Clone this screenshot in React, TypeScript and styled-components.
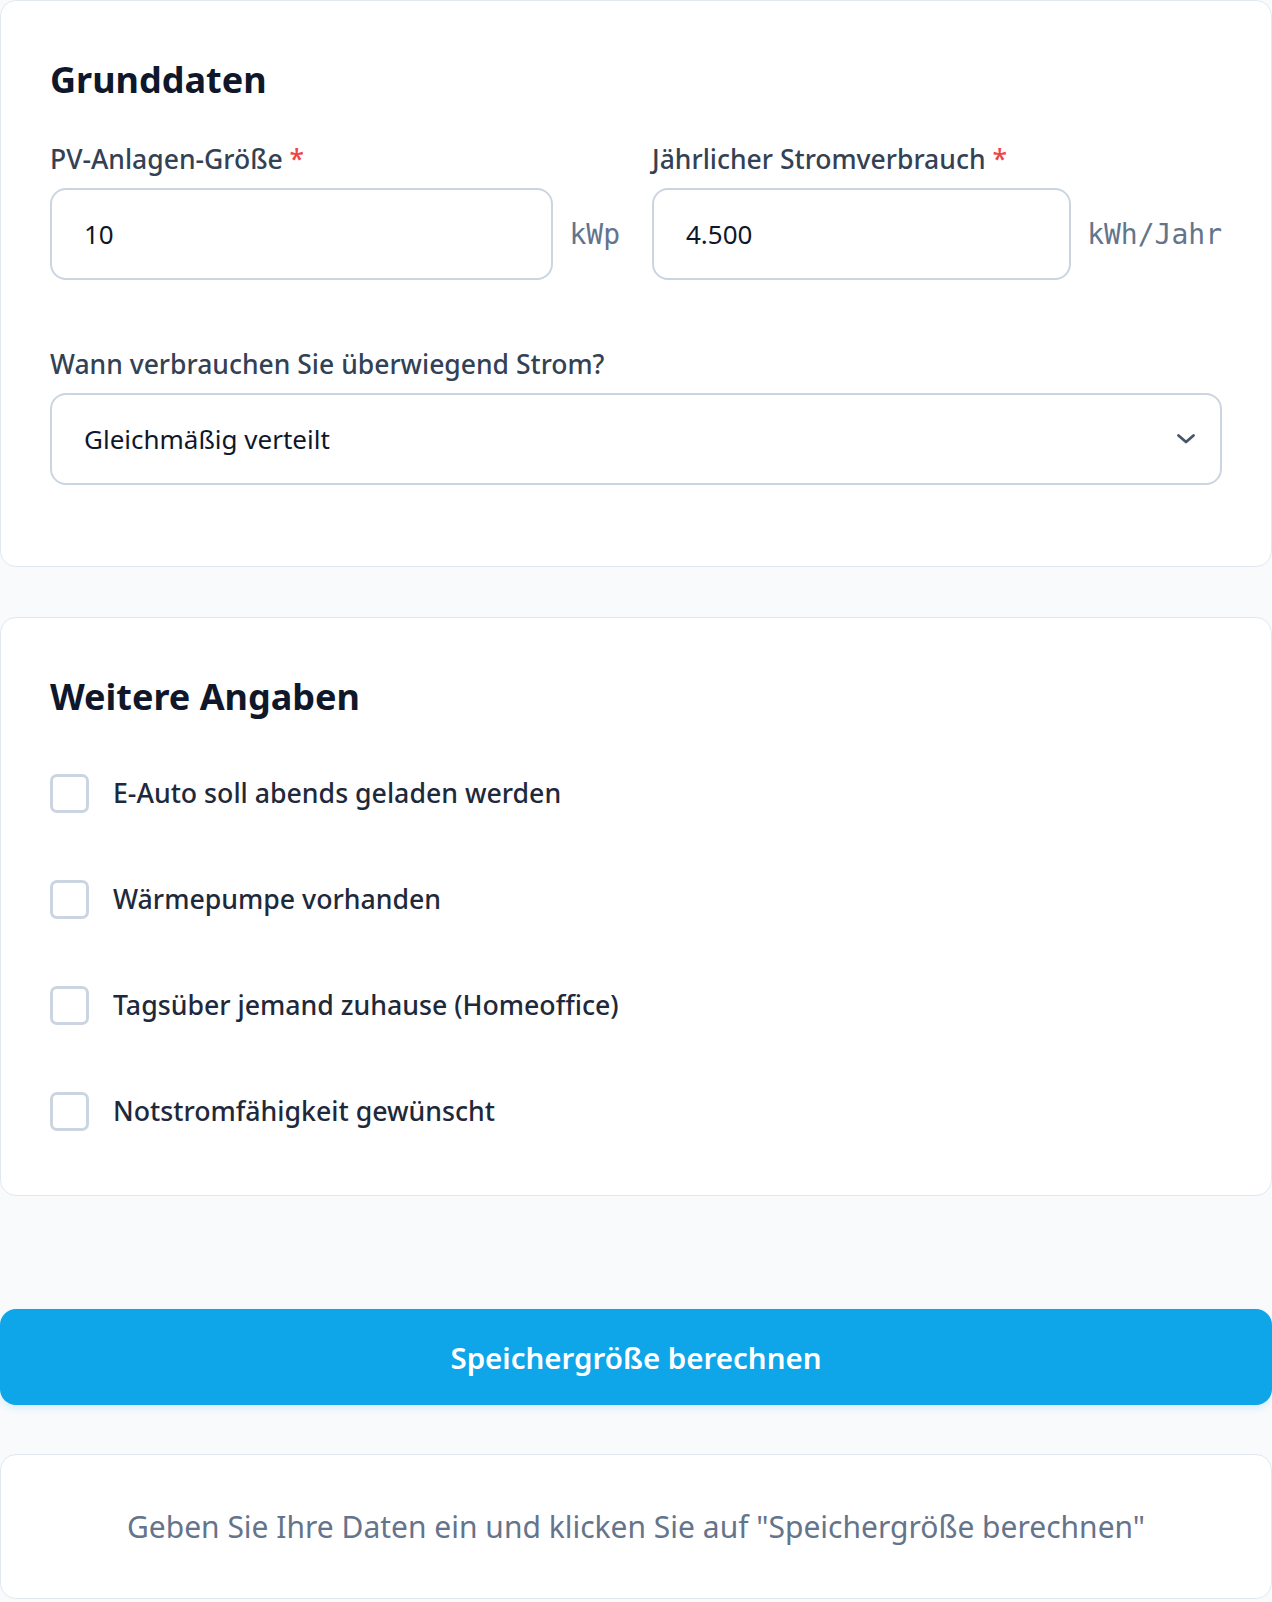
import React from "react";
import styled, { createGlobalStyle } from "styled-components";

const GlobalStyle = createGlobalStyle`
  * { box-sizing: border-box; }
  html, body { margin: 0; padding: 0; }
  body {
    background: #f8fafc;
    font-family: "Noto Sans", "Open Sans", sans-serif;
    color: #0f172a;
  }
`;

const Page = styled.div`
  display: flex;
  flex-direction: column;
  width: 1272px;
`;

const Card = styled.section<{ $gapAfter?: number }>`
  background: #ffffff;
  border: 1px solid #e2e8f0;
  border-radius: 16px;
  padding: 48px 49px;
  margin-bottom: ${(p) => p.$gapAfter ?? 0}px;
`;

const CardTitle = styled.h2<{ $after: number }>`
  margin: 9px 0 ${(p) => p.$after}px;
  font-size: 36px;
  line-height: 44px;
  font-weight: 700;
  color: #0f172a;
`;

const FieldGrid = styled.div`
  display: grid;
  grid-template-columns: minmax(0, 1fr) minmax(0, 1fr);
  column-gap: 32px;
  margin-bottom: 68px;
`;

const Field = styled.div<{ $after?: number }>`
  display: flex;
  flex-direction: column;
  min-width: 0;
  margin-bottom: ${(p) => p.$after ?? 0}px;
`;

const Label = styled.label`
  font-size: 26.5px;
  line-height: 32px;
  font-weight: 500;
  color: #334155;
  margin-bottom: 13px;
  white-space: nowrap;
`;

const Required = styled.span`
  color: #ef4444;
`;

const InputRow = styled.div`
  display: flex;
  align-items: center;
  gap: 16px;
`;

const TextInput = styled.input`
  flex: 1;
  width: 0;
  min-width: 0;
  height: 92px;
  padding: 0 32px;
  border: 2px solid #cbd5e1;
  border-radius: 16px;
  background: #ffffff;
  font-family: "Noto Sans", sans-serif;
  font-size: 26px;
  color: #0f172a;
  outline: none;
`;

const Unit = styled.span`
  flex-shrink: 0;
  font-family: "DejaVu Sans Mono", monospace;
  font-size: 28px;
  color: #64748b;
  white-space: nowrap;
`;

const SelectWrap = styled.div`
  position: relative;
`;

const Select = styled.select`
  appearance: none;
  -webkit-appearance: none;
  width: 100%;
  height: 92px;
  padding: 0 80px 0 32px;
  border: 2px solid #cbd5e1;
  border-radius: 16px;
  background: #ffffff;
  font-family: "Noto Sans", sans-serif;
  font-size: 26px;
  color: #0f172a;
  outline: none;
`;

const ChevronIcon = styled.svg`
  position: absolute;
  right: 26px;
  top: 50%;
  transform: translateY(-50%);
  pointer-events: none;
`;

const CheckList = styled.div`
  display: flex;
  flex-direction: column;
  gap: 66px;
  margin: 54px 0 16px;
`;

const CheckRow = styled.label`
  display: flex;
  align-items: center;
  gap: 24px;
  min-height: 40px;
  cursor: pointer;
`;

const CheckBox = styled.input`
  appearance: none;
  -webkit-appearance: none;
  margin: 0;
  width: 39px;
  height: 39px;
  border: 3px solid #cbd5e1;
  border-radius: 7px;
  background: #ffffff;
  flex-shrink: 0;
`;

const CheckText = styled.span`
  font-size: 26.7px;
  line-height: 40px;
  font-weight: 500;
  color: #1e293b;
`;

const SubmitButton = styled.button`
  margin: 113px 0 49px;
  height: 96px;
  border: none;
  border-radius: 16px;
  background: #0ea5e9;
  color: #ffffff;
  font-family: "Noto Sans", sans-serif;
  font-size: 29.5px;
  font-weight: 600;
  box-shadow: 0 4px 6px rgba(14, 165, 233, 0.12);
  cursor: pointer;
`;

const HintCard = styled.section`
  background: #ffffff;
  border: 1px solid #e2e8f0;
  border-radius: 16px;
  padding: 48px;
  text-align: center;
`;

const HintText = styled.p`
  margin: 0;
  font-size: 30px;
  line-height: 47px;
  color: #64748b;
`;

const options = [
  "E-Auto soll abends geladen werden",
  "Wärmepumpe vorhanden",
  "Tagsüber jemand zuhause (Homeoffice)",
  "Notstromfähigkeit gewünscht",
];

export default function App() {
  return (
    <>
      <GlobalStyle />
      <Page>
        <Card $gapAfter={50}>
          <CardTitle $after={41}>Grunddaten</CardTitle>
          <FieldGrid>
            <Field>
              <Label>
                PV-Anlagen-Größe <Required>*</Required>
              </Label>
              <InputRow>
                <TextInput defaultValue="10" />
                <Unit>kWp</Unit>
              </InputRow>
            </Field>
            <Field>
              <Label>
                Jährlicher Stromverbrauch <Required>*</Required>
              </Label>
              <InputRow>
                <TextInput defaultValue="4.500" />
                <Unit>kWh/Jahr</Unit>
              </InputRow>
            </Field>
          </FieldGrid>
          <Field $after={33}>
            <Label>Wann verbrauchen Sie überwiegend Strom?</Label>
            <SelectWrap>
              <Select defaultValue="even">
                <option value="even">Gleichmäßig verteilt</option>
                <option value="day">Überwiegend tagsüber</option>
                <option value="evening">Überwiegend abends</option>
              </Select>
              <ChevronIcon width="20" height="12" viewBox="0 0 20 12" fill="none">
                <path
                  d="M2.5 2.5 L10 9 L17.5 2.5"
                  stroke="#475569"
                  strokeWidth="2.8"
                  strokeLinecap="round"
                  strokeLinejoin="round"
                />
              </ChevronIcon>
            </SelectWrap>
          </Field>
        </Card>

        <Card>
          <CardTitle $after={0}>Weitere Angaben</CardTitle>
          <CheckList>
            {options.map((o) => (
              <CheckRow key={o}>
                <CheckBox type="checkbox" />
                <CheckText>{o}</CheckText>
              </CheckRow>
            ))}
          </CheckList>
        </Card>

        <SubmitButton type="button">Speichergröße berechnen</SubmitButton>

        <HintCard>
          <HintText>
            Geben Sie Ihre Daten ein und klicken Sie auf "Speichergröße berechnen"
          </HintText>
        </HintCard>
      </Page>
    </>
  );
}
